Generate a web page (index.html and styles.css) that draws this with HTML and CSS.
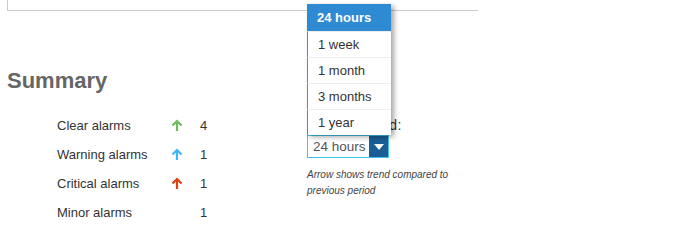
FILE: index.html
```html
<!DOCTYPE html>
<html lang="en">
<head>
    <meta charset="UTF-8">
    <title>Summary</title>
    <link rel="stylesheet" href="styles.css">
</head>
<body>
    <div class="panel-top"></div>

    <h2 class="summary-title">Summary</h2>

    <div class="summary">
        <div class="alarm-list">
            <div class="alarm-row">
                <span class="alarm-name">Clear alarms</span>
                <span class="trend">
                    <svg width="12" height="13" viewBox="0 0 12 13"><path d="M6 12V2M1.5 6.5L6 2l4.5 4.5" fill="none" stroke="#6dbb5e" stroke-width="2.2"/></svg>
                </span>
                <span class="alarm-count">4</span>
            </div>
            <div class="alarm-row">
                <span class="alarm-name">Warning alarms</span>
                <span class="trend">
                    <svg width="12" height="13" viewBox="0 0 12 13"><path d="M6 12V2M1.5 6.5L6 2l4.5 4.5" fill="none" stroke="#3db7f4" stroke-width="2.2"/></svg>
                </span>
                <span class="alarm-count">1</span>
            </div>
            <div class="alarm-row">
                <span class="alarm-name">Critical alarms</span>
                <span class="trend">
                    <svg width="12" height="13" viewBox="0 0 12 13"><path d="M6 12V2M1.5 6.5L6 2l4.5 4.5" fill="none" stroke="#e2400e" stroke-width="2.2"/></svg>
                </span>
                <span class="alarm-count">1</span>
            </div>
            <div class="alarm-row">
                <span class="alarm-name">Minor alarms</span>
                <span class="trend"></span>
                <span class="alarm-count">1</span>
            </div>
        </div>

        <div class="period">
            <div class="period-label">Select period:</div>
            <div class="period-select">
                <span class="period-value">24 hours</span>
                <span class="period-button"></span>
            </div>
            <p class="period-note">Arrow shows trend compared to<br>previous period</p>

            <ul class="period-menu">
                <li class="selected">24 hours</li>
                <li>1 week</li>
                <li>1 month</li>
                <li>3 months</li>
                <li>1 year</li>
            </ul>
        </div>
    </div>
</body>
</html>
```

FILE: styles.css
```css
body {
    margin: 0;
    font-family: "Liberation Sans", Arial, sans-serif;
    color: #333;
    background-color: #fff;
}
.panel-top {
    margin-left: 7px;
    width: 470px;
    height: 10px;
    border-left: 1px solid #ccc;
    border-bottom: 1px solid #ccc;
}
.summary-title {
    margin: 57px 0 0 7px;
    font-size: 22px;
    line-height: 25px;
    font-weight: bold;
    color: #666;
}
.summary {
    display: flex;
    margin-top: 18px;
}
.alarm-list {
    margin-left: 57px;
    width: 250px;
}
.alarm-row {
    display: flex;
    align-items: center;
    height: 29px;
    font-size: 13px;
}
.alarm-name {
    width: 114px;
}
.trend {
    display: flex;
    width: 29px;
}
.alarm-count {
    width: 20px;
}
.period {
    position: relative;
    font-size: 13px;
}
.period-label {
    height: 29px;
    line-height: 29px;
    padding-left: 1px;
    font-size: 14px;
    letter-spacing: 0.6px;
}
.period-select {
    display: flex;
    width: 80px;
    height: 21px;
    margin-top: -5px;
    border: 1px solid #3ec4ec;
}
.period-value {
    flex: 1;
    padding-left: 5px;
    line-height: 21px;
    font-size: 13.5px;
    color: #555;
}
.period-button {
    display: flex;
    align-items: center;
    justify-content: center;
    width: 19px;
    background-color: #1b5e95;
}
.period-button::after {
    content: "";
    border-left: 5px solid transparent;
    border-right: 5px solid transparent;
    border-top: 6px solid #fff;
}
.period-note {
    margin: 9px 0 0;
    font-size: 10px;
    line-height: 16px;
    font-style: italic;
    color: #444;
}
.period-menu {
    position: absolute;
    left: 0;
    top: -107px;
    width: 84px;
    margin: 0;
    padding: 0;
    list-style: none;
    background-color: #fff;
    box-shadow: 3px 2px 5px rgba(0, 0, 0, 0.35);
}
.period-menu li {
    height: 25px;
    line-height: 25px;
    padding-left: 10px;
    font-size: 13px;
    border-left: 1px solid #4b8fc4;
    border-top: 1px solid #eee;
    color: #333;
}
.period-menu li.selected {
    height: 27px;
    line-height: 27px;
    border: none;
    padding-left: 10px;
    background-color: #2d8ad3;
    color: #fff;
    font-weight: bold;
}
```
